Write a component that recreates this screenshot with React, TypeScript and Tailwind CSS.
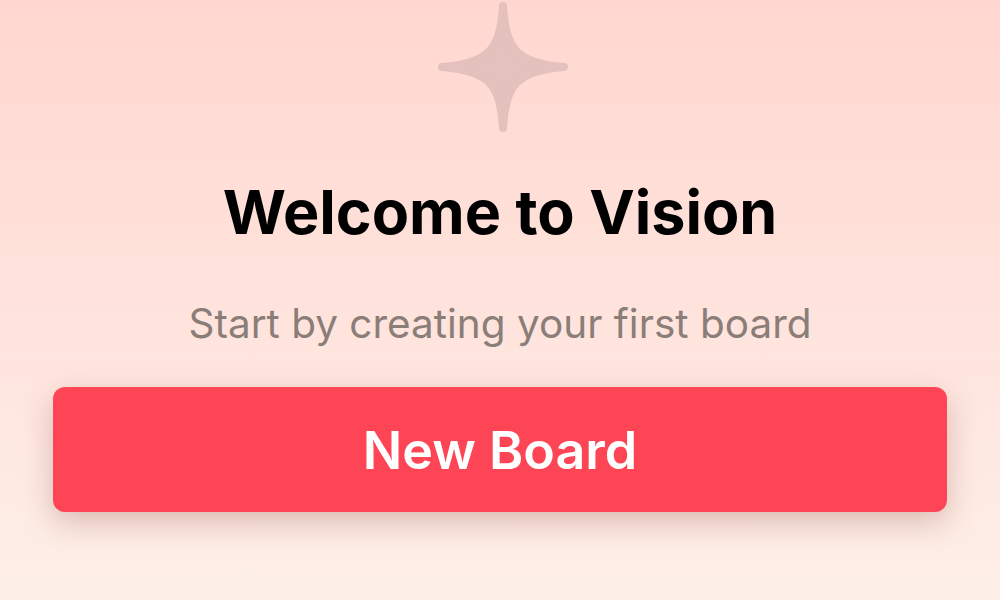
import React from "react";

function Sparkle() {
  return (
    <svg width="140" height="140" viewBox="-70 -70 140 140" aria-hidden>
      <path
        d="M0 -61 C 3 -18, 13 -4, 61 0 C 13 4, 3 18, 0 61 C -3 18, -13 4, -61 0 C -13 -4, -3 -18, 0 -61 Z"
        fill="#e4c1bd"
        stroke="#e4c1bd"
        strokeWidth="8"
        strokeLinejoin="round"
      />
    </svg>
  );
}

export default function App() {
  return (
    <div
      className="flex h-[600px] w-[1000px] flex-col items-center overflow-hidden bg-gradient-to-b from-[#ffd7d0] to-[#fdefe8]"
      style={{ fontFamily: "Inter, 'Noto Sans', sans-serif" }}
    >
      <div className="-mt-[3px] ml-[5px]">
        <Sparkle />
      </div>

      <h1 className="mt-[45px] text-[61px] font-bold leading-none text-black">
        Welcome to Vision
      </h1>

      <p className="mt-[61px] text-[40.5px] leading-none text-[#8b7d78]">
        Start by creating your first board
      </p>

      <button
        type="button"
        className="mt-[42px] flex h-[125px] w-[894px] items-center justify-center rounded-[12px] bg-[#fe4556] pt-[3px] text-[52px] font-semibold text-white shadow-[0_10px_30px_rgba(130,60,50,0.28)]"
      >
        New Board
      </button>
    </div>
  );
}
